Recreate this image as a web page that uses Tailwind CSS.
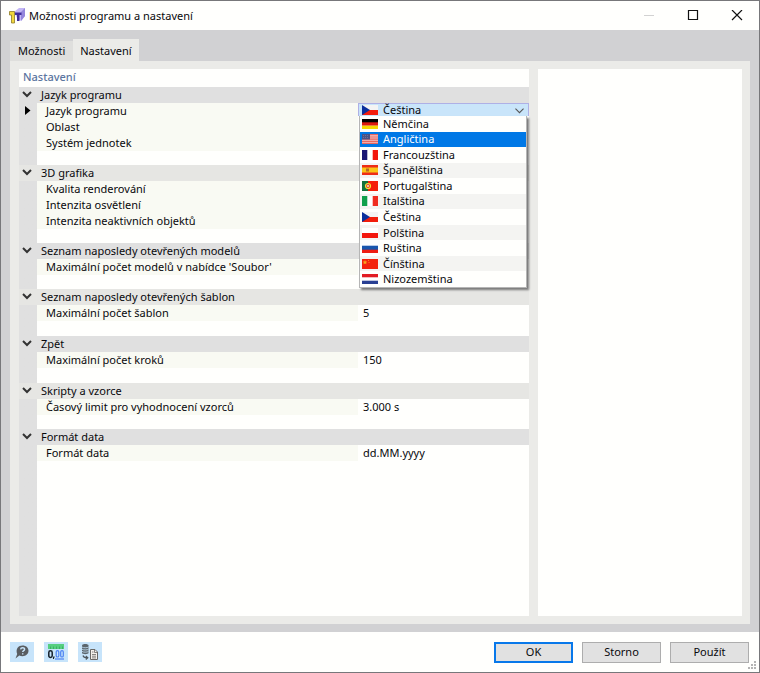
<!DOCTYPE html>
<html lang="cs">
<head>
<meta charset="utf-8">
<title>Možnosti programu a nastavení</title>
<script src="https://cdn.jsdelivr.net/npm/@tailwindcss/browser@4"></script>
</head>
<body class="font-['Noto_Sans','Open_Sans',sans-serif] text-[11px] leading-4 text-[#08080c] bg-[#fffffc]">
<svg class="absolute w-0 h-0" aria-hidden="true">
  <symbol id="chev" viewBox="0 0 10 10"><path d="M1 2l4 4 4-4" fill="none" stroke="#333" stroke-width="2"/></symbol>
  <symbol id="cz" viewBox="0 0 16 10"><path fill="#f4f4f4" d="M0 0h16v5H0z"/><path fill="#f21d0c" d="M0 5h16v5H0z"/><path fill="#0b2f9c" d="M0 0l8 5-8 5z"/></symbol>
</svg>
<div class="flex flex-col min-h-screen border border-[#77777a]">
  <header class="flex items-center h-[29px] pl-2 bg-[#fffffd]">
    <svg class="w-4 h-4" viewBox="0 0 16 16" aria-hidden="true">
      <path d="M5 4l5-4h6v8l-4 5-4-3z" fill="#c3b6f5"/><path d="M12 4l4-4v8l-4 5z" fill="#9486dc"/>
      <path d="M6 4.500h6.500v2.500h-2v6H8V7H6z" fill="#3f2d9b"/>
      <path d="M.5 3.500h5v11.500H2.500V7H.5z" fill="#f0d63c" stroke="#8d7a26" stroke-width=".8"/>
    </svg>
    <h1 class="ml-1 grow">Možnosti programu a nastavení</h1>
    <button aria-label="Minimalizovat" class="w-11 grid place-items-center"><svg class="w-3 h-3" viewBox="0 0 12 12"><path d="M1 5.500h10" stroke="#d2d2d2"/></svg></button>
    <button aria-label="Maximalizovat" class="w-11 grid place-items-center"><svg class="w-3 h-3" viewBox="0 0 12 12"><path d="M1.500 .5h9v9h-9z" fill="none" stroke="#111" stroke-width="1.200"/></svg></button>
    <button aria-label="Zavřít" class="w-11 grid place-items-center"><svg class="w-3 h-3" viewBox="0 0 12 12"><path d="M1 0l10 10M11 0L1 10" stroke="#111" stroke-width="1.200"/></svg></button>
  </header>
  <main class="grow flex flex-col bg-[#d1d1d3] px-[9px] pt-[9px] pb-2">
    <div role="tablist" class="flex items-end">
      <button role="tab" aria-selected="false" class="h-5 px-2 bg-[#dfdfdd]">Možnosti</button>
      <button role="tab" aria-selected="true" class="h-[22px] px-[7px] pt-[2px] bg-[#ebebe8]">Nastavení</button>
    </div>
    <div role="tabpanel" class="grow flex gap-[9px] bg-[#ebebe8] p-2 pl-[9px]">
      <section class="flex-5 flex flex-col bg-[#fffffd]">
        <h2 class="h-[18px] pl-1 text-[#5b759f] font-medium">Nastavení</h2>
        <div class="grow bg-linear-to-r from-[#e0e0e0] from-[18px] to-[#fffffd] to-[18px]">
        <table class="w-full table-fixed border-collapse text-left">
          <colgroup><col class="w-[18px]"><col class="w-[321px]"><col></colgroup>
          <tbody>
            <tr class="h-4 bg-[#e0e0e0]"><th class="p-0 pl-[3px]"><svg class="w-[10px] h-[10px]"><use href="#chev"/></svg></th><th colspan="2" class="p-0 pl-1 font-normal">Jazyk programu</th></tr>
            <tr class="h-4"><td class="p-0 pl-[6px]"><svg class="w-[6px] h-[11px]" viewBox="0 0 6 11"><path d="M0 0l5.500 4.500L0 9z" fill="#000"/></svg></td><td class="p-0 pl-[9px] bg-[#f9faf3]" id="lang">Jazyk programu</td>
              <td class="p-0">
                <div class="relative h-4 z-10">
                  <button role="combobox" aria-labelledby="lang" aria-expanded="true" aria-controls="langs" class="flex items-center w-full h-[13px] pl-[3px] pr-1 text-left leading-3 bg-[#c9e5fa] border border-b-0 border-[#aeb0e6]"><svg class="w-4 h-[10px]"><use href="#cz"/></svg><span class="ml-[5px] grow">Čeština</span><svg class="w-[9px] h-[9px]" viewBox="0 0 10 10"><path d="M.5 3L5 7.500 9.500 3" fill="none" stroke="#555" stroke-width="1.200"/></svg></button>
                  <ul id="langs" role="listbox" aria-labelledby="lang" class="absolute top-[13px] left-[1px] right-[2px] grid grid-rows-11 h-[172px] leading-3 border border-t-0 border-[#b5b5b5] bg-[#fffffd] shadow-[2px_2px_2px_#777]">
                    <li role="option" class="flex items-center gap-[5px] pl-[2px]"><svg class="w-4 h-[10px]" viewBox="0 0 16 10"><path d="M0 0h16v4H0z"/><path fill="#dc1a10" d="M0 3.300h16v3.400H0z"/><path fill="#f5d800" d="M0 6.700h16V10H0z"/></svg>Němčina</li>
                    <li role="option" aria-selected="true" class="flex items-center gap-[5px] pl-[2px] bg-[#0078e6] text-white"><svg class="w-4 h-[10px]" viewBox="0 0 16 10"><path fill="#f3c3c5" d="M0 0h16v10H0z"/><path d="M0 .7h16M0 3h16M0 5.200h16M0 7.300h16M0 9.400h16" stroke="#e8675f" stroke-width="1.200"/><path fill="#4b5284" d="M0 0h8v5.500H0z"/><path d="M1 1.500h6M1 3.500h6" stroke="#8187a8" stroke-width=".6" stroke-dasharray="1 1"/></svg>Angličtina</li>
                    <li role="option" class="flex items-center gap-[5px] pl-[2px]"><svg class="w-4 h-[10px]" viewBox="0 0 16 10"><path fill="#fff" d="M0 0h16v10H0z"/><path fill="#191675" d="M0 0h5.300v10H0z"/><path fill="#f3160d" d="M10.700 0H16v10h-5.300z"/></svg>Francouzština</li>
                    <li role="option" class="flex items-center gap-[5px] pl-[2px] bg-[#f4f4f2]"><svg class="w-4 h-[10px]" viewBox="0 0 16 10"><path fill="#ee2d16" d="M0 0h16v10H0z"/><path fill="#fac515" d="M0 2.500h16v5H0z"/><path fill="#b96a25" d="M4 3.500h3v3H4z"/></svg>Španělština</li>
                    <li role="option" class="flex items-center gap-[5px] pl-[2px]"><svg class="w-4 h-[10px]" viewBox="0 0 16 10"><path fill="#f5210c" d="M0 0h16v10H0z"/><path fill="#13723d" d="M0 0h6v10H0z"/><circle cx="6" cy="5" r="2.500" fill="#e63b20" stroke="#f4e23c" stroke-width="1.200"/><path fill="#eee" d="M5.300 4h1.400v2H5.300z"/></svg>Portugalština</li>
                    <li role="option" class="flex items-center gap-[5px] pl-[2px] bg-[#f4f4f2]"><svg class="w-4 h-[10px]" viewBox="0 0 16 10"><path fill="#fff" d="M0 0h16v10H0z"/><path fill="#10a04c" d="M0 0h5.300v10H0z"/><path fill="#f02c20" d="M10.700 0H16v10h-5.300z"/></svg>Italština</li>
                    <li role="option" class="flex items-center gap-[5px] pl-[2px]"><svg class="w-4 h-[10px]"><use href="#cz"/></svg>Čeština</li>
                    <li role="option" class="flex items-center gap-[5px] pl-[2px] bg-[#f4f4f2]"><svg class="w-4 h-[10px]" viewBox="0 0 16 10"><path fill="#fff" d="M0 0h16v5H0z"/><path fill="#f3160d" d="M0 5h16v5H0z"/></svg>Polština</li>
                    <li role="option" class="flex items-center gap-[5px] pl-[2px]"><svg class="w-4 h-[10px]" viewBox="0 0 16 10"><path fill="#fff" d="M0 0h16v3.300H0z"/><path fill="#1956ad" d="M0 2.700h16V7H0z"/><path fill="#ee1c12" d="M0 6.700h16V10H0z"/></svg>Ruština</li>
                    <li role="option" class="flex items-center gap-[5px] pl-[2px] bg-[#f4f4f2]"><svg class="w-4 h-[10px]" viewBox="0 0 16 10"><path fill="#f3230d" d="M0 0h16v10H0z"/><path fill="#f9a51c" d="M3 1l.7 1.400 1.500.2-1 1.100.2 1.500L3 4.500l-1.400.7.2-1.500-1-1.100 1.500-.2z"/><circle cx="6.500" cy="1.500" r=".5" fill="#f9a51c"/><circle cx="7" cy="3.500" r=".5" fill="#f9a51c"/></svg>Čínština</li>
                    <li role="option" class="flex items-center gap-[5px] pl-[2px]"><svg class="w-4 h-[10px]" viewBox="0 0 16 10"><path fill="#fff" d="M0 0h16v10H0z"/><path fill="#e21c24" d="M0 0h16v3.300H0z"/><path fill="#293f93" d="M0 6.700h16V10H0z"/></svg>Nizozemština</li>
                  </ul>
                </div>
              </td></tr>
            <tr class="h-4"><td></td><td class="p-0 pl-[9px] bg-[#f9faf3]">Oblast</td><td></td></tr>
            <tr class="h-4"><td></td><td class="p-0 pl-[9px] bg-[#f9faf3]">Systém jednotek</td><td></td></tr>
            <tr class="h-[14px]"><td colspan="3" class="p-0"></td></tr>
            <tr class="h-4 bg-[#e6e6e3]"><th class="p-0 pl-[3px]"><svg class="w-[10px] h-[10px]"><use href="#chev"/></svg></th><th colspan="2" class="p-0 pl-1 font-normal">3D grafika</th></tr>
            <tr class="h-4"><td></td><td class="p-0 pl-[9px] bg-[#f9faf3]">Kvalita renderování</td><td></td></tr>
            <tr class="h-4"><td></td><td class="p-0 pl-[9px] bg-[#f9faf3]">Intenzita osvětlení</td><td></td></tr>
            <tr class="h-4"><td></td><td class="p-0 pl-[9px] bg-[#f9faf3]">Intenzita neaktivních objektů</td><td></td></tr>
            <tr class="h-[14px]"><td colspan="3" class="p-0"></td></tr>
            <tr class="h-4 bg-[#e0e0e0]"><th class="p-0 pl-[3px]"><svg class="w-[10px] h-[10px]"><use href="#chev"/></svg></th><th colspan="2" class="p-0 pl-1 font-normal">Seznam naposledy otevřených modelů</th></tr>
            <tr class="h-4"><td></td><td class="p-0 pl-[9px] bg-[#f9faf3]">Maximální počet modelů v nabídce 'Soubor'</td><td></td></tr>
            <tr class="h-[14px]"><td colspan="3" class="p-0"></td></tr>
            <tr class="h-4 bg-[#e6e6e3]"><th class="p-0 pl-[3px]"><svg class="w-[10px] h-[10px]"><use href="#chev"/></svg></th><th colspan="2" class="p-0 pl-1 font-normal">Seznam naposledy otevřených šablon</th></tr>
            <tr class="h-4"><td></td><td class="p-0 pl-[9px] bg-[#f9faf3]">Maximální počet šablon</td><td class="p-0 pl-[5px]">5</td></tr>
            <tr class="h-[15px]"><td colspan="3" class="p-0"></td></tr>
            <tr class="h-4 bg-[#e0e0e0]"><th class="p-0 pl-[3px]"><svg class="w-[10px] h-[10px]"><use href="#chev"/></svg></th><th colspan="2" class="p-0 pl-1 font-normal">Zpět</th></tr>
            <tr class="h-4"><td></td><td class="p-0 pl-[9px] bg-[#f9faf3]">Maximální počet kroků</td><td class="p-0 pl-[5px]">150</td></tr>
            <tr class="h-[15px]"><td colspan="3" class="p-0"></td></tr>
            <tr class="h-4 bg-[#e6e6e3]"><th class="p-0 pl-[3px]"><svg class="w-[10px] h-[10px]"><use href="#chev"/></svg></th><th colspan="2" class="p-0 pl-1 font-normal">Skripty a vzorce</th></tr>
            <tr class="h-4"><td></td><td class="p-0 pl-[9px] bg-[#f9faf3]">Časový limit pro vyhodnocení vzorců</td><td class="p-0 pl-[5px]">3.000 s</td></tr>
            <tr class="h-[14px]"><td colspan="3" class="p-0"></td></tr>
            <tr class="h-4 bg-[#e0e0e0]"><th class="p-0 pl-[3px]"><svg class="w-[10px] h-[10px]"><use href="#chev"/></svg></th><th colspan="2" class="p-0 pl-1 font-normal">Formát data</th></tr>
            <tr class="h-4"><td></td><td class="p-0 pl-[9px] bg-[#f9faf3]">Formát data</td><td class="p-0 pl-[5px]">dd.MM.yyyy</td></tr>
          </tbody>
        </table>
        </div>
      </section>
      <aside class="flex-2 bg-[#fffffd]"></aside>
    </div>
  </main>
  <footer class="relative flex items-center h-10 px-[9px] gap-[10px] bg-[#fffffd]">
    <button aria-label="Nápověda" class="w-6 h-5 grid place-items-center bg-[#c7e4fa]"><svg class="w-4 h-4" viewBox="0 0 16 16"><path d="M8.500 1.500c3.600 0 6 2.200 6 5.300s-2.400 5.400-6 5.400c-1.300 0-2.300-.2-3.200-.7L1.500 14.500l1.700-4.600C1.300 5 4.500 1.500 8.500 1.500z" fill="#595d61"/><path d="M6.600 5.400c.2-2.300 4.200-2.200 4 0-.1 1.300-1.900 1.300-1.900 2.700M8.700 9.200v1.400" fill="none" stroke="#c7e4fa" stroke-width="1.400"/></svg></button>
    <button aria-label="Jednotky a desetinná místa" class="w-6 h-5 grid place-items-center bg-[#c7e4fa]"><svg class="w-4 h-4" viewBox="0 0 16 16"><path fill="#55cf80" d="M0 0h16v5H0z"/><path d="M2.500 2.500V5M5.500 2.500V5M8.500 2.500V5M11.500 2.500V5M14.500 2.500V5" stroke="#2fa45a" stroke-width=".7"/><rect x=".8" y="6.700" width="3.400" height="6.800" rx="1.700" fill="none" stroke="#15202a" stroke-width="1.500"/><path fill="#15202a" d="M5.200 12.500h1.500l-.8 2.500h-1z"/><g fill="none" stroke="#4c82f2" stroke-width="1.200"><rect x="8.200" y="6.600" width="2.600" height="6.400" rx="1.300"/><rect x="12.700" y="6.600" width="2.600" height="6.400" rx="1.300"/><path d="M7 15h9"/></g></svg></button>
    <button aria-label="Načíst z databáze" class="w-6 h-5 grid place-items-center bg-[#c7e4fa]"><svg class="w-4 h-4" viewBox="0 0 16 16"><path d="M0 1.500C0-.5 6.500-.5 6.500 1.500V9C6.500 10.500 0 10.500 0 9z" fill="#5c666d"/><path d="M0 3c1 1 5.500 1 6.500 0M0 5.200c1 1 5.500 1 6.500 0M0 7.400c1 1 5.500 1 6.500 0" fill="none" stroke="#c7e4fa" stroke-width=".8"/><path d="M1 11.500c.5 1.700 2 2.300 4 2.300M3.800 12l2 1.800-2 1.700" fill="none" stroke="#4e565c" stroke-width="1.200"/><path d="M8.500 5.500h4.500l2.500 2.500v7.500h-7z" fill="#f4f1eb" stroke="#6a6864"/><path d="M12.500 5.500V8.500h3M10 8h1.500M10 10.500h4M10 12.200h4M10 13.900h4" fill="none" stroke="#6a6864" stroke-width=".8"/></svg></button>
    <div class="ml-auto flex gap-[9px] pr-px">
      <button class="w-[79px] h-[21px] bg-[#e1e1e1] border-2 border-[#0878ea]">OK</button>
      <button class="w-[79px] h-[21px] bg-[#e1e1e1] border border-[#adadad]">Storno</button>
      <button class="w-[79px] h-[21px] bg-[#e1e1e1] border border-[#adadad]">Použít</button>
    </div>
    <svg class="absolute right-[2px] bottom-[2px] w-[9px] h-[9px]" viewBox="0 0 9 9" fill="#b4b4b4" aria-hidden="true"><path d="M6 0h2v2H6zM3 3h2v2H3zM6 3h2v2H6zM0 6h2v2H0zM3 6h2v2H3zM6 6h2v2H6z"/></svg>
  </footer>
</div>
</body>
</html>
